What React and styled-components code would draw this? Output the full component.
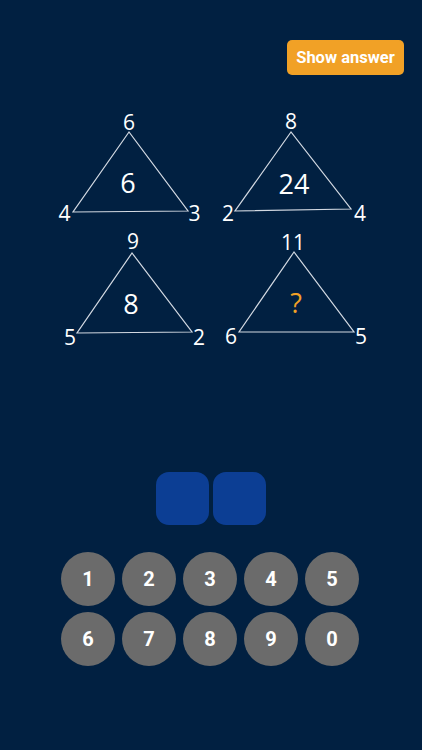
import React, { useState } from 'react';
import styled, { createGlobalStyle } from 'styled-components';

const GlobalStyle = createGlobalStyle`
  html, body {
    margin: 0;
    padding: 0;
    background-color: #012041;
  }
  * {
    box-sizing: border-box;
  }
`;

const Screen = styled.div`
  width: 422px;
  min-height: 750px;
  background-color: #012041;
  display: flex;
  flex-direction: column;
  font-family: Roboto, 'Liberation Sans', sans-serif;
`;

const TopBar = styled.div`
  display: flex;
  justify-content: flex-end;
  padding: 40px 18px 0 0;
`;

const AnswerButton = styled.button`
  height: 35px;
  width: 117px;
  padding: 0;
  border: none;
  border-radius: 5px;
  background-color: #f1a126;
  color: #fff;
  font-family: Roboto, 'Liberation Sans', sans-serif;
  font-weight: 700;
  font-size: 16.5px;
  cursor: pointer;
`;

const PuzzleGrid = styled.div`
  display: grid;
  grid-template-columns: 160px 160px;
  grid-auto-rows: 120px;
  margin: 33px 0 0 50px;
`;

const PuzzleSvg = styled.svg`
  display: block;
  width: 160px;
  height: 126px;
  overflow: visible;
  font-family: 'Open Sans', 'Noto Sans', sans-serif;
`;

const Slots = styled.div`
  display: flex;
  justify-content: center;
  gap: 4px;
  margin-top: 124px;
`;

const Slot = styled.div`
  width: 53px;
  height: 53px;
  border-radius: 13px;
  background-color: #0c3e94;
  color: #fff;
  display: flex;
  align-items: center;
  justify-content: center;
  font-size: 26px;
  font-weight: 700;
`;

const Keypad = styled.div`
  display: grid;
  grid-template-columns: repeat(5, 54px);
  gap: 6px 7px;
  justify-content: center;
  margin-top: 27px;
  padding-right: 2px;
`;

const Key = styled.button`
  width: 54px;
  height: 54px;
  border-radius: 50%;
  border: none;
  padding: 0;
  background-color: #6b6b6b;
  color: #fff;
  font-family: Roboto, 'Liberation Sans', sans-serif;
  font-weight: 700;
  font-size: 20px;
  cursor: pointer;
`;

const puzzles = [
  { top: '6', left: '4', right: '3', mid: '6', t: [79, 22], a: [79, 24], bl: [23, 104], br: [138, 103], m: [78, 85], l: [14.5, 113], r: [144.5, 113] },
  { top: '8', left: '2', right: '4', mid: '24', t: [81, 21], a: [81, 24], bl: [25, 103], br: [141, 101], m: [84, 86], l: [18, 113], r: [150, 113] },
  { top: '9', left: '5', right: '2', mid: '8', t: [83, 21], a: [82, 25], bl: [27, 105], br: [142, 104], m: [81, 86], l: [20, 117], r: [149, 117] },
  { top: '11', left: '6', right: '5', mid: '?', t: [83, 22], a: [84, 24], bl: [29, 104], br: [144, 104], m: [86, 85], l: [21, 116], r: [151, 116], unknown: true },
];

function Puzzle({ p }) {
  const points = [p.a, p.bl, p.br].map((pt) => pt.join(',')).join(' ');
  return (
    <PuzzleSvg viewBox="0 0 160 126">
      <polygon points={points} fill="none" stroke="#d3d9e2" strokeWidth="1.2" />
      <g fill="#fff" fontSize="21" textAnchor="middle">
        <text x={p.t[0]} y={p.t[1]}>{p.top}</text>
        <text x={p.l[0]} y={p.l[1]}>{p.left}</text>
        <text x={p.r[0]} y={p.r[1]}>{p.right}</text>
      </g>
      <text
        x={p.m[0]}
        y={p.m[1]}
        fontSize="27"
        textAnchor="middle"
        fill={p.unknown ? '#f1a126' : '#fff'}
      >
        {p.mid}
      </text>
    </PuzzleSvg>
  );
}

const keys = ['1', '2', '3', '4', '5', '6', '7', '8', '9', '0'];

export default function App() {
  const [answer, setAnswer] = useState([]);

  const press = (k) => {
    setAnswer((prev) => (prev.length >= 2 ? [k] : [...prev, k]));
  };

  return (
    <Screen>
      <GlobalStyle />
      <TopBar>
        <AnswerButton onClick={() => setAnswer(['1', '4'])}>Show answer</AnswerButton>
      </TopBar>
      <PuzzleGrid>
        {puzzles.map((p, i) => (
          <Puzzle key={i} p={p} />
        ))}
      </PuzzleGrid>
      <Slots>
        <Slot>{answer[0]}</Slot>
        <Slot>{answer[1]}</Slot>
      </Slots>
      <Keypad>
        {keys.map((k) => (
          <Key key={k} onClick={() => press(k)}>{k}</Key>
        ))}
      </Keypad>
    </Screen>
  );
}
